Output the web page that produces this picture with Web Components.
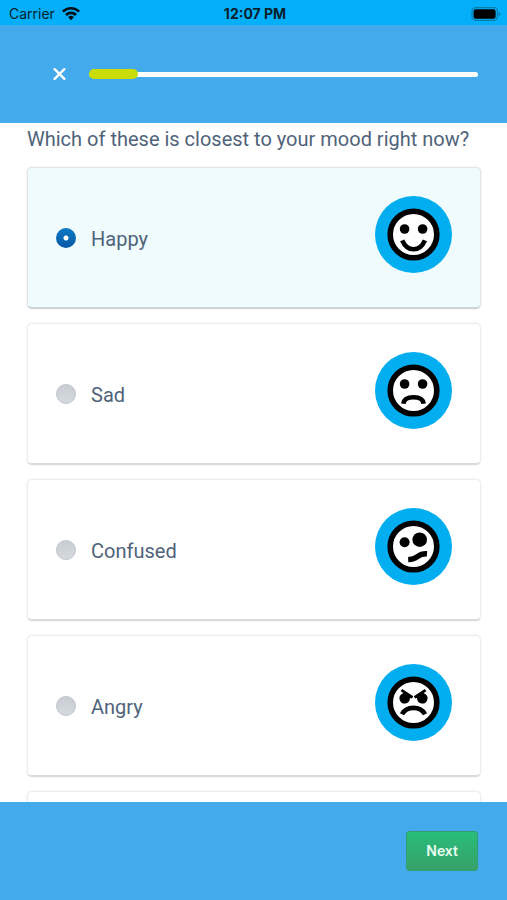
<!DOCTYPE html>
<html lang="en">
<head>
<meta charset="utf-8">
<meta name="viewport" content="width=device-width, initial-scale=1">
<title>Mood check-in</title>
<style>
  html, body { height: 100%; margin: 0; }
  body { font-family: Inter, "Liberation Sans", sans-serif; color: #50637a; background: #fff; }
</style>
</head>
<body>
<mood-app></mood-app>
<script>
const define = (name, html, setup) => {
  const template = document.createElement('template');
  template.innerHTML = html;
  customElements.define(name, class extends HTMLElement {
    constructor() {
      super();
      this.attachShadow({ mode: 'open' }).append(template.content.cloneNode(true));
    }
    connectedCallback() { if (setup) setup(this, this.shadowRoot); }
  });
};

define('status-bar', `
<style>
  :host { display: grid; grid-template-columns: 1fr auto 1fr; align-items: center; height: 25px; padding: 2px 6px 0 9px; box-sizing: border-box; background: #02aff8; color: #08212d; font-size: 14px; line-height: 20px; }
  .carrier { display: flex; align-items: center; gap: 6px; }
  .time { font-weight: 700; }
  .battery { justify-self: end; }
  svg { display: block; }
</style>
<div class="carrier"><span>Carrier</span>
  <svg width="20" height="15" viewBox="0 0 20 15" aria-label="Wi-Fi" role="img">
    <g fill="none" stroke="#021018" stroke-width="2.6"><path d="M1.9 5.6a11.3 11.3 0 0 1 16.2 0"/><path d="M5 9a7 7 0 0 1 10 0"/></g>
    <path d="M10 14.2 7.1 11.2a4.1 4.1 0 0 1 5.8 0z" fill="#021018"/>
  </svg>
</div>
<span class="time">12:07 PM</span>
<svg class="battery" width="30" height="14" viewBox="0 0 30 14" aria-label="Battery full" role="img">
  <rect x="1" y=".6" width="25.5" height="12.8" rx="4" fill="none" stroke="#087ba9" stroke-width="1.2"/>
  <rect x="2.6" y="2.3" width="22" height="9.4" rx="2.3" fill="#000"/>
  <path d="M27.7 4.7q3.4 2.3 0 4.6z" fill="#087ba9"/>
</svg>`);

define('progress-header', `
<style>
  :host { display: flex; align-items: center; gap: 22px; height: 98px; padding: 0 29px 0 52px; box-sizing: border-box; background: #43abec; }
  button { appearance: none; border: 0; padding: 0; width: 15px; height: 16px; background: none; cursor: pointer; }
  svg { display: block; }
  .track { flex: 1; display: flex; align-items: center; height: 5px; border-radius: 3px; background: #fff; }
  .fill { width: 49px; flex: 0 0 auto; height: 10px; border-radius: 5px; background: #c9dc05; }
</style>
<button type="button" aria-label="Close"><svg width="15" height="16" viewBox="0 0 15 16"><path d="M2.6 3.1 12.4 12.9M12.4 3.1 2.6 12.9" stroke="#fff" stroke-width="2.3" stroke-linecap="round"/></svg></button>
<div class="track" role="progressbar" aria-label="Progress" aria-valuemin="0" aria-valuemax="100" aria-valuenow="12"><div class="fill"></div></div>`);

const FACES = {
  happy: '<circle cx="29.6" cy="33" r="4.8"/><circle cx="47.6" cy="33" r="4.8"/><path d="M27.2 44.4C29.8 50.5 33.8 53.3 38.5 53.3S47.3 50.5 49.9 44.4" class="line"/>',
  sad: '<circle cx="29.6" cy="32" r="4.8"/><circle cx="47.6" cy="32" r="4.8"/><path d="M28.4 51.7C28.8 47 32.5 45.2 38.5 45.2S48.2 47 48.6 51.7" class="line"/>',
  confused: '<circle cx="29.6" cy="34.3" r="5"/><circle cx="44.7" cy="31.7" r="7.3"/><path d="M33.2 51.6C37.3 51.4 39.5 50.8 42.4 48.6S48 45.6 52 45.8" class="line wide"/>',
  angry: '<path d="M27.2 25 38.2 32.2 37 34.6 34.9 34.1A5.2 5.2 0 1 1 27.2 29.8L28.4 29 25.6 27.2z"/><path d="M49.8 25 38.8 32.2 40 34.6 42.1 34.1A5.2 5.2 0 1 0 49.8 29.8L48.600 29 51.400 27.200z"/><path d="M27 50.3C29.5 45.5 33 43.9 38.5 43.9S47.5 45.5 50 50.3" class="line"/>'
};

define('mood-face', `
<style>
  :host { display: block; }
  svg { display: block; width: 77px; height: 77px; }
  .line { fill: none; stroke: #000; stroke-width: 4.6; }
  .wide { stroke-width: 5.4; }
</style>
<svg viewBox="0 0 77 77" aria-hidden="true"><circle cx="38.5" cy="38.5" r="38.5" fill="#02adf0"/><circle cx="38.5" cy="38.5" r="23.3" fill="#fff" stroke="#000" stroke-width="5.6"/><g></g></svg>`,
(host, root) => { root.querySelector('g').innerHTML = FACES[host.getAttribute('kind')] || ''; });

define('option-card', `
<style>
  :host { display: block; min-height: 142px; box-sizing: border-box; border: 1px solid #eceeef; border-radius: 5px; border-bottom: 2px solid #d8dcde; background: #fff; box-shadow: 0 0 2px rgba(60, 70, 80, .14); }
  :host([selected]) { background: #effbfc; border-color: #dfe5e8; border-bottom-color: #cdd5d9; }
</style>
<slot></slot>`);

define('mood-option', `
<style>
  :host { display: block; }
  label { display: flex; align-items: center; padding: 28px 28px 34px 28px; cursor: pointer; }
  input { appearance: none; margin: 7px 15px 0 0; width: 20px; height: 20px; flex: none; border: 1px solid #bdc5cc; border-radius: 50%; background: linear-gradient(#c8cdd3, #d6dade); }
  input:checked { border: 0; background: radial-gradient(circle, #fff 0 2px, transparent 3px), linear-gradient(#0b78c2, #0758a7); }
  span { flex: 1; padding-top: 8px; font: 20px/24px Roboto, "Liberation Sans", sans-serif; }
</style>
<option-card><label><input type="radio"><span><slot></slot></span><mood-face></mood-face></label></option-card>`,
(host, root) => {
  const input = root.querySelector('input');
  const card = root.querySelector('option-card');
  root.querySelector('mood-face').setAttribute('kind', host.getAttribute('kind'));
  root.querySelector('mood-face').connectedCallback();
  host.select = on => { input.checked = on; card.toggleAttribute('selected', on); };
  host.select(host.hasAttribute('checked'));
  input.addEventListener('change', () => host.dispatchEvent(new CustomEvent('mood-pick', { bubbles: true })));
});

define('mood-question', `
<style>
  :host { display: block; padding: 2px 26px 0 27px; }
  h1 { margin: 0 0 14px; font: 20px/28px Roboto, "Liberation Sans", sans-serif; }
  .list { display: grid; gap: 14px; }
</style>
<h1 id="q"><slot name="question"></slot></h1>
<div class="list" role="radiogroup" aria-labelledby="q"><slot></slot></div>`,
host => host.addEventListener('mood-pick', event => {
  host.querySelectorAll('mood-option').forEach(option => option.select(option === event.target));
}));

define('action-footer', `
<style>
  :host { display: flex; align-items: center; justify-content: flex-end; height: 98px; padding: 0 29px; box-sizing: border-box; background: #43abec; }
  button { appearance: none; box-sizing: border-box; height: 40px; padding: 0 19px; border: 1px solid #319d70; border-radius: 3px; background: linear-gradient(#28bd7a, #38a169); color: #e9fff1; font: 600 14px/20px Inter, "Liberation Sans", sans-serif; cursor: pointer; }
</style>
<button type="button"><slot></slot></button>`);

define('mood-app', `
<style>
  :host { display: flex; flex-direction: column; height: 100vh; }
  status-bar, progress-header, action-footer { flex: none; }
  main { flex: 1; min-height: 0; overflow-y: auto; scrollbar-width: none; }
</style>
<status-bar></status-bar>
<progress-header></progress-header>
<main>
  <mood-question>
    <span slot="question">Which of these is closest to your mood right now?</span>
    <mood-option kind="happy" checked>Happy</mood-option>
    <mood-option kind="sad">Sad</mood-option>
    <mood-option kind="confused">Confused</mood-option>
    <mood-option kind="angry">Angry</mood-option>
    <option-card></option-card>
  </mood-question>
</main>
<action-footer>Next</action-footer>`);
</script>
</body>
</html>
